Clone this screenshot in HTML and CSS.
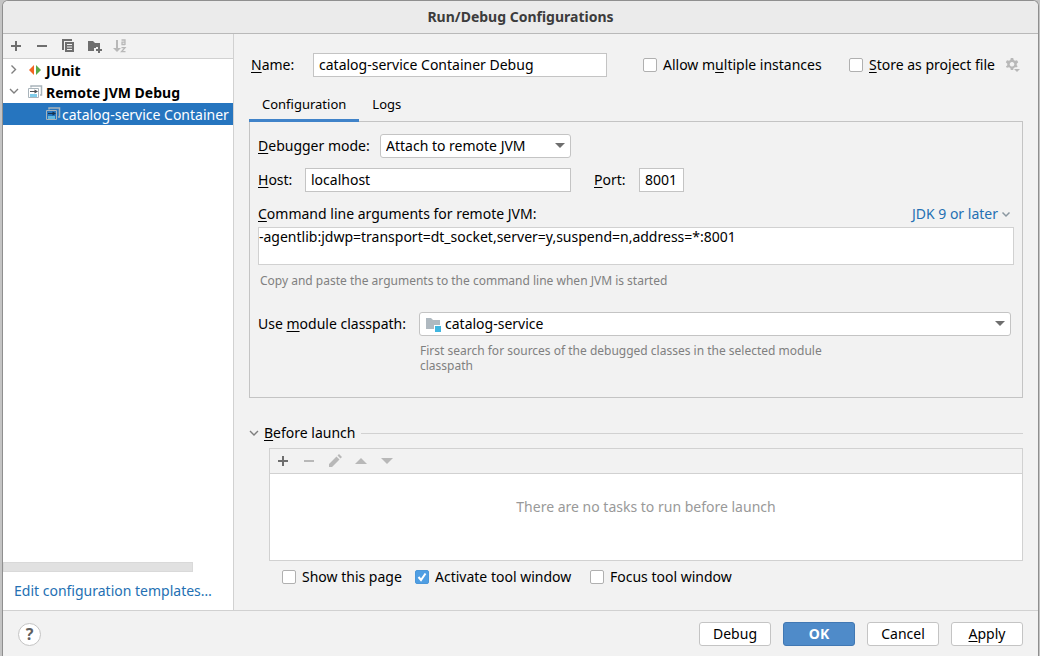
FILE: index.html
```html
<!DOCTYPE html>
<html lang="en">
<head>
<meta charset="utf-8">
<title>Run/Debug Configurations</title>
<link rel="stylesheet" href="styles.css">
</head>
<body>
<div class="backdrop">
<div class="dialog">
  <header class="titlebar"><h1>Run/Debug Configurations</h1></header>
  <div class="body">
    <aside class="sidebar">
      <div class="toolbar">
        <button class="tool" aria-label="Add"><svg width="16" height="16"><path d="M3 7h4V3h2v4h4v2H9v4H7V9H3z" fill="#6e6e6e"/></svg></button>
        <button class="tool" aria-label="Remove"><svg width="16" height="16"><path d="M3 7h10v2H3z" fill="#6e6e6e"/></svg></button>
        <button class="tool" aria-label="Copy"><svg width="16" height="16"><path d="M2 1h10v2H4v9H2z" fill="#6e6e6e"/><path fill-rule="evenodd" d="M5 4h9v10H5zM7 6v1h5V6zM7 8.500v1h5v-1zM7 11v1h5v-1z" fill="#6e6e6e"/></svg></button>
        <button class="tool" aria-label="Save to folder"><svg width="16" height="16"><path d="M2 3h5l2 2h5v4h-4v1H8v3H2z" fill="#6e6e6e"/><path d="M12 9h2v2h2v2h-2v2h-2v-2h-2v-2h2z" fill="#6e6e6e"/></svg></button>
        <button class="tool" aria-label="Sort" disabled><svg width="16" height="16"><path d="M4 2h2v8h3l-4 4-4-4h3z" fill="#b8b8b8"/><path d="M9.500 2H13v5M13 4.200h-3v2.300h3M9.500 9.700h3.500l-3.500 4H13.500" fill="none" stroke="#b8b8b8" stroke-width="1.300"/></svg></button>
      </div>
      <ul class="tree">
        <li class="node">
          <svg width="16" height="16"><path d="M5.500 3.500l4 4-4 4" fill="none" stroke="#7f7f7f" stroke-width="1.400"/></svg>
          <svg class="kind" width="16" height="16"><path d="M7 3v10L2 8z" fill="#f26522"/><path d="M9 3v10l5-5z" fill="#59a946"/></svg>
          <b>JUnit</b>
        </li>
        <li class="node">
          <svg width="16" height="16"><path d="M4 5l4 4 4-4" fill="none" stroke="#7f7f7f" stroke-width="1.400"/></svg>
          <svg class="kind" width="16" height="16"><path d="M4 3.500V2h10.500v9H13" fill="none" stroke="#a9b4bb" stroke-width="1.500"/><path d="M1.500 4.500h10v9h-10z" fill="#fff" stroke="#a9b4bb"/><path d="M3 7h4.500V5.500L11 7.500 7.500 9.500V8H3z" fill="#4b5054"/><path d="M3 10h7v3H3z" fill="#7fcdea"/></svg>
          <b>Remote JVM Debug</b>
        </li>
        <li class="node leaf selected">
          <svg class="kind" width="16" height="16"><path d="M4 3.500V2h10.500v9H13" fill="none" stroke="#a9b4bb" stroke-width="1.500"/><path d="M1.500 4.500h10v9h-10z" fill="#2675bf" stroke="#a9b4bb"/><path d="M3 7h4.500V5.500L11 7.500 7.500 9.500V8H3z" fill="#17324c"/><path d="M3 10h7v3H3z" fill="#62b9e0"/></svg>
          <span>catalog-service Container</span>
        </li>
      </ul>
      <div class="scroll"><div class="thumb"></div></div>
      <a class="templates" href="#">Edit configuration templates…</a>
    </aside>
    <main class="main">
      <div class="row name-row">
        <label class="name-label" for="name"><u>N</u>ame:</label>
        <input class="field name-field" id="name" type="text" value="catalog-service Container Debug">
        <span class="spacer"></span>
        <label class="check allow"><input type="checkbox"><span>Allow m<u>u</u>ltiple instances</span></label>
        <label class="check store"><input type="checkbox"><span><u>S</u>tore as project file</span></label>
        <button class="gear" aria-label="Storage options"><svg width="16" height="16"><path fill-rule="evenodd" fill="#b8b8b8" d="M5.800 1h2.400l.5 2 1.300.8 2-.6 1.200 2.100-1.500 1.400v1.600l1 1-1 1H10l-1.500 1-.3 1.700H5.800l-.5-2-1.300-.8-2 .6L.800 9.700l1.500-1.400V6.700L.800 5.300 2 3.200l2 .6L5.300 3zM7 5a2.300 2.300 0 1 0 .01 0z"/><path d="M9 12h6l-3 3z" fill="#b8b8b8"/></svg></button>
      </div>
      <div class="tabs" role="tablist">
        <button class="tab active" role="tab" aria-selected="true">Configuration</button>
        <button class="tab" role="tab" aria-selected="false">Logs</button>
      </div>
      <section class="panel">
        <div class="row">
          <label class="mode-label" for="mode"><u>D</u>ebugger mode:</label>
          <div class="combo mode"><select id="mode"><option>Attach to remote JVM</option></select><svg class="arrow" width="10" height="6"><path d="M0 0h10L5 5z" fill="#6e6e6e"/></svg></div>
        </div>
        <div class="row host-row">
          <label class="host-label" for="host"><u>H</u>ost:</label>
          <input class="field host-field" id="host" type="text" value="localhost">
          <label class="port-label" for="port"><u>P</u>ort:</label>
          <input class="field port-field" id="port" type="text" value="8001">
        </div>
        <div class="row args-head">
          <label for="args"><u>C</u>ommand line arguments for remote JVM:</label>
          <span class="spacer"></span>
          <button class="jdk">JDK 9 or later<svg width="10" height="8"><path d="M1.500 2.500L5 6l3.500-3.500" fill="none" stroke="#8a97a0" stroke-width="1.500"/></svg></button>
        </div>
        <textarea class="args" id="args" spellcheck="false">-agentlib:jdwp=transport=dt_socket,server=y,suspend=n,address=*:8001</textarea>
        <p class="hint args-hint">Copy and paste the arguments to the command line when JVM is started</p>
        <div class="row module-row">
          <label class="module-label" for="module">Use <u>m</u>odule classpath:</label>
          <div class="combo module">
            <select id="module"><option>catalog-service</option></select>
            <svg class="folder" width="16" height="16"><path d="M1 2h5l2 2h7v5H9v4H1z" fill="#afb9c0"/><path d="M10 10h6v6h-6z" fill="#40b6e0"/></svg>
            <svg class="arrow" width="10" height="6"><path d="M0 0h10L5 5z" fill="#6e6e6e"/></svg>
          </div>
        </div>
        <p class="hint module-hint">First search for sources of the debugged classes in the selected module classpath</p>
      </section>
      <section class="before">
        <div class="before-head">
          <button class="fold"><svg width="10" height="8"><path d="M1 2l4 4 4-4" fill="none" stroke="#7f7f7f" stroke-width="1.400"/></svg><span><u>B</u>efore launch</span></button>
          <hr class="rule">
        </div>
        <div class="tasks">
          <div class="toolbar">
            <button class="tool" aria-label="Add task"><svg width="16" height="16"><path d="M3 7h4V3h2v4h4v2H9v4H7V9H3z" fill="#6e6e6e"/></svg></button>
            <button class="tool" aria-label="Remove task" disabled><svg width="16" height="16"><path d="M3 7h10v2H3z" fill="#b8b8b8"/></svg></button>
            <button class="tool" aria-label="Edit task" disabled><svg width="16" height="16"><path d="M2 11l7.500-7.500 3 3L5 14H2zM10.500 2.500L12 1l3 3-1.500 1.500z" fill="#b8b8b8"/></svg></button>
            <button class="tool" aria-label="Move up" disabled><svg width="16" height="16"><path d="M2 11h12L8 5z" fill="#b8b8b8"/></svg></button>
            <button class="tool" aria-label="Move down" disabled><svg width="16" height="16"><path d="M2 5h12l-6 6z" fill="#b8b8b8"/></svg></button>
          </div>
          <p class="empty">There are no tasks to run before launch</p>
        </div>
        <div class="options">
          <label class="check opt-show"><input type="checkbox"><span>Show this page</span></label>
          <label class="check opt-activate"><input type="checkbox" checked><span>Activate tool window</span></label>
          <label class="check"><input type="checkbox"><span>Focus tool window</span></label>
        </div>
      </section>
    </main>
  </div>
  <footer class="footer">
    <button class="help" aria-label="Help">?</button>
    <span class="spacer"></span>
    <button class="btn">Debug</button>
    <button class="btn primary">OK</button>
    <button class="btn">Cancel</button>
    <button class="btn"><span><u>A</u>pply</span></button>
  </footer>
</div>
</div>
</body>
</html>
```

FILE: styles.css
```css
* { box-sizing: border-box; }
body {
  margin: 0;
  color: #000;
  font: 14px/20px "Noto Sans", "Open Sans", sans-serif;
}
button, input, select, textarea { font: inherit; color: inherit; margin: 0; }
button { padding: 0; border: 0; background: none; white-space: nowrap; }
svg { display: block; flex: none; }
label { white-space: nowrap; }
u { text-decoration: underline 1px; text-underline-offset: 2px; }
h1, p, ul { margin: 0; padding: 0; }

.backdrop { min-height: 100vh; display: flex; padding: 0 1px 0 2px; background: #c4c4c4; }
.dialog {
  flex: 1;
  min-width: 0;
  display: flex;
  flex-direction: column;
  background: #f2f2f2;
  border: 1px solid #8f8f8f;
  border-bottom: 0;
  border-radius: 6px 6px 0 0;
  overflow: hidden;
}
.titlebar { height: 33px; background: #ebebeb; border-bottom: 1px solid #b9b9b9; text-align: center; }
.titlebar h1 { font-size: 14px; line-height: 32px; font-weight: 700; color: #3c3c3c; }
.body { flex: 1; display: grid; grid-template-columns: 231px minmax(0, 1fr); }
.spacer { flex: 1; }

.sidebar { display: flex; flex-direction: column; background: #fff; border-right: 1px solid #d1d1d1; overflow: hidden; }
.toolbar { display: flex; align-items: center; gap: 10px; height: 25px; padding-left: 5px; background: #f2f2f2; border-bottom: 1px solid #d1d1d1; }
.tree { list-style: none; flex: 1; }
.node { display: flex; align-items: center; height: 22px; padding-left: 3px; white-space: nowrap; }
.node b, .node span { padding-top: 2px; }
.kind { margin: 0 3px 0 5px; }
.leaf { padding-left: 37px; }
.leaf .kind { margin-right: 1px; }
.selected { background: #2675bf; color: #fff; }
.thumb { width: 190px; height: 10px; background: #e1e1e1; border: 1px solid #d9d9d9; }
.templates { padding: 9px 0 9px 11px; color: #2470b3; text-decoration: none; white-space: nowrap; }

.main { padding: 19px 15px 0; display: flex; flex-direction: column; }
.row { display: flex; align-items: center; }
.field { height: 24px; padding: 0 5px 2px; border: 1px solid #c4c4c4; background: #fff; }
.name-label { width: 64px; padding-left: 2px; }
.name-field { flex: 0 1 294px; min-width: 0; }
.check { display: flex; align-items: center; gap: 6px; }
.check input { appearance: none; width: 14px; height: 14px; border: 1px solid #b0b0b0; border-radius: 2px; background: #fff; }
.check input:checked {
  border-color: #4b97d9;
  background: #4f9ee3 url("data:image/svg+xml,%3Csvg xmlns='http://www.w3.org/2000/svg' viewBox='0 0 12 12'%3E%3Cpath d='M2.500 6l2.500 3L9.500 2.500' fill='none' stroke='white' stroke-width='2'/%3E%3C/svg%3E") center / 12px 12px;
}
.allow { width: 206px; }
.store { width: 152px; }
.gear { margin: 0 2px 0 4px; }

.tabs { display: flex; margin-top: 10px; height: 35px; z-index: 1; font-size: 13px; }
.tab { padding: 2px 13px 0; border-bottom: 3px solid transparent; }
.tab.active { border-color: #4083c9; }
.panel { margin-top: -1px; padding: 12px 8px 24px; border: 1px solid #c4c4c4; }
.combo { display: grid; height: 24px; align-items: center; }
.combo > * { grid-area: 1 / 1; }
.combo select { appearance: none; width: 100%; height: 24px; padding: 0 5px; background: #fff; border: 1px solid #c4c4c4; border-radius: 3px; }
.arrow { justify-self: end; margin-right: 6px; pointer-events: none; }
.folder { margin-left: 6px; pointer-events: none; }
.mode-label { width: 122px; }
.mode { width: 191px; }
.host-row { margin-top: 10px; }
.host-label { width: 47px; }
.host-field { width: 266px; }
.port-label { width: 68px; padding-left: 23px; }
.port-field { width: 45px; }
.args-head { margin-top: 12px; }
.jdk { display: flex; align-items: center; gap: 3px; margin-right: 3px; color: #2470b3; }
.args { display: block; width: 100%; height: 38px; margin-top: 3px; padding: 0; border: 1px solid #d1d1d1; background: #fff; line-height: 18px; resize: none; overflow: hidden; }
.hint { font-size: 12px; line-height: 15px; color: #808080; }
.args-hint { margin: 8px 0 0 2px; }
.module-row { margin-top: 24px; }
.module-label { width: 161px; }
.module { flex: 1; margin-right: 3px; }
.module select { padding-left: 25px; }
.module-hint { margin: 7px 0 0 162px; max-width: 420px; }

.before { margin-top: 25px; }
.before-head { display: flex; align-items: center; gap: 6px; }
.fold { display: flex; align-items: center; gap: 5px; }
.rule { flex: 1; margin: 0; border: 0; border-top: 1px solid #d1d1d1; }
.tasks { margin: 5px 0 0 20px; border: 1px solid #d1d1d1; background: #fff; }
.empty { height: 86px; padding-top: 23px; text-align: center; color: #999; }
.options { display: flex; margin: 6px 0 0 33px; }
.opt-show { width: 133px; }
.opt-activate { width: 175px; }

.footer { display: flex; align-items: center; gap: 12px; padding: 11px 15px 10px; border-top: 1px solid #d1d1d1; }
.help { width: 23px; height: 23px; border: 1px solid #c4c4c4; border-radius: 50%; background: #fff; color: #5e5e5e; font-size: 16px; font-weight: 700; }
.btn { width: 72px; height: 24px; border: 1px solid #c4c4c4; border-radius: 3px; background: #fff; }
.primary { background: #4f8bc9; border-color: #4178b3; color: #fff; font-weight: 700; }
```
